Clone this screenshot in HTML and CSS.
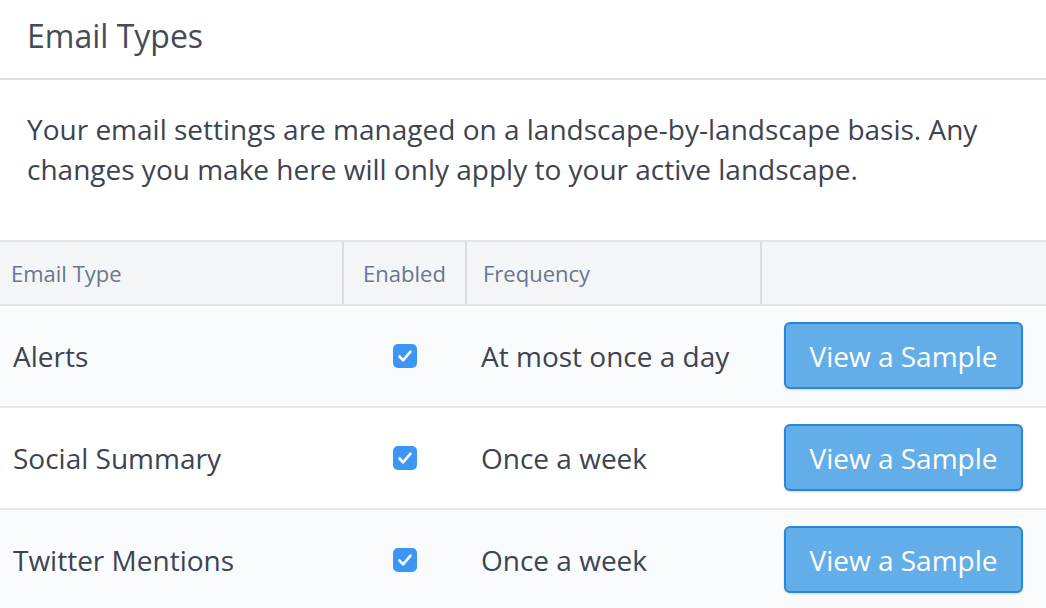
FILE: index.html
```html
<!DOCTYPE html>
<html lang="en">
<head>
<meta charset="utf-8">
<title>Email Types</title>
<link rel="stylesheet" href="styles.css">
</head>
<body>
<header class="title-bar">
  <h1 class="title">Email Types</h1>
</header>
<p class="intro">Your email settings are managed on a landscape-by-landscape basis. Any changes you make here will only apply to your active landscape.</p>
<div class="email-table">
  <div class="row head">
    <div class="cell c-type">Email Type</div>
    <div class="cell c-enabled">Enabled</div>
    <div class="cell c-freq">Frequency</div>
    <div class="cell c-action"></div>
  </div>
  <div class="row body odd">
    <div class="cell c-type">Alerts</div>
    <div class="cell c-enabled"><span class="checkbox"><svg viewBox="0 0 24 24" width="24" height="24"><path d="M6.5 12.5l3.6 3.8 7.4-8.6" fill="none" stroke="#fff" stroke-width="2.6" stroke-linecap="round" stroke-linejoin="round"/></svg></span></div>
    <div class="cell c-freq">At most once a day</div>
    <div class="cell c-action"><button class="btn">View a Sample</button></div>
  </div>
  <div class="row body">
    <div class="cell c-type">Social Summary</div>
    <div class="cell c-enabled"><span class="checkbox"><svg viewBox="0 0 24 24" width="24" height="24"><path d="M6.5 12.5l3.6 3.8 7.4-8.6" fill="none" stroke="#fff" stroke-width="2.6" stroke-linecap="round" stroke-linejoin="round"/></svg></span></div>
    <div class="cell c-freq">Once a week</div>
    <div class="cell c-action"><button class="btn">View a Sample</button></div>
  </div>
  <div class="row body odd">
    <div class="cell c-type">Twitter Mentions</div>
    <div class="cell c-enabled"><span class="checkbox"><svg viewBox="0 0 24 24" width="24" height="24"><path d="M6.5 12.5l3.6 3.8 7.4-8.6" fill="none" stroke="#fff" stroke-width="2.6" stroke-linecap="round" stroke-linejoin="round"/></svg></span></div>
    <div class="cell c-freq">Once a week</div>
    <div class="cell c-action"><button class="btn">View a Sample</button></div>
  </div>
</div>
</body>
</html>
```
FILE: styles.css
```css
html, body {
  margin: 0;
  padding: 0;
  background: #ffffff;
}
body {
  font-family: "Open Sans", "Liberation Sans", sans-serif;
  color: #3d4451;
  overflow: hidden;
}
.title-bar {
  height: 78px;
  box-sizing: content-box;
  border-bottom: 2px solid #dedfe1;
  padding: 0 0 0 27px;
}
.title {
  margin: 0;
  padding-top: 16px;
  font-size: 32px;
  line-height: 40px;
  font-weight: 400;
  color: #454b57;
}
.intro {
  margin: 29px 0 51px;
  padding: 0 27px;
  font-size: 28px;
  line-height: 40px;
  color: #3d4451;
}
.email-table {
  width: 100%;
}
.row {
  display: grid;
  grid-template-columns: 342px 123px 295px 1fr;
}
.row.head {
  background: #f4f5f7;
  border-top: 2px solid #e3e4e6;
  border-bottom: 2px solid #e3e4e6;
  height: 62px;
  font-size: 22px;
  line-height: 62px;
  color: #68778b;
}
.row.head .cell + .cell {
  border-left: 2px solid #dadcde;
}
.row.head .c-type { padding-left: 11px; }
.row.head .c-enabled { text-align: center; }
.row.head .c-freq { padding-left: 16px; }
.row.body {
  height: 100px;
  border-bottom: 2px solid #e6e7e9;
  font-size: 28px;
  line-height: 100px;
  background: #ffffff;
}
.row.body.odd {
  background: #f9fbfd;
}
.row.body .c-type { padding-left: 13px; }
.row.body .c-freq { padding-left: 16px; }
.row.body .c-enabled {
  display: flex;
  align-items: center;
  justify-content: center;
  padding-left: 2px;
}
.row.body .c-action {
  display: flex;
  align-items: center;
  padding: 0 23px 0 24px;
}
.cell {
  white-space: nowrap;
  min-width: 0;
}
.checkbox {
  display: block;
  width: 24px;
  height: 24px;
  border-radius: 5px;
  background: #3b96f5;
  margin-top: -1px;
}
.checkbox svg {
  display: block;
}
.btn {
  width: 100%;
  height: 67px;
  border: 2px solid #2a86d6;
  border-radius: 6px;
  background: #63aee9;
  color: #ffffff;
  font-family: "Open Sans", "Liberation Sans", sans-serif;
  font-size: 28px;
  line-height: 1;
  padding: 0;
  box-shadow: 0 1px 2px rgba(0, 0, 0, 0.15);
  margin-top: -1px;
}
```
